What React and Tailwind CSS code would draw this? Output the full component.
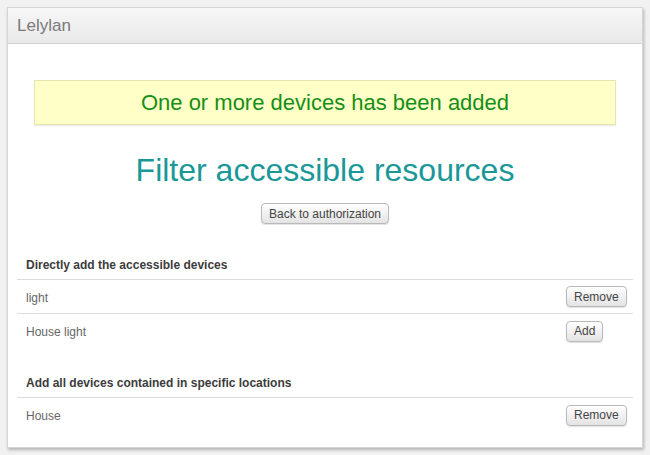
import React from 'react';

const font = { fontFamily: '"Liberation Sans", Arial, sans-serif' };

function Btn({ children }) {
  return (
    <button className="h-[21px] px-[7px] rounded-[4px] border border-[#b9b9b9] bg-gradient-to-b from-white to-[#e3e3e3] text-[12px] leading-none text-[#444] shadow-[0_1px_1px_rgba(0,0,0,0.12)]">
      {children}
    </button>
  );
}

function Row({ label, action, border }) {
  return (
    <div className={`flex items-center h-[34px] pl-[9px] pr-[7px] pt-[2px] ${border ? 'border-b border-[#dcdcdc]' : ''}`}>
      <div className="flex-1 text-[12px] text-[#666]">{label}</div>
      <div className="w-[60px] flex -mt-[2px]">
        <Btn>{action}</Btn>
      </div>
    </div>
  );
}

function Heading({ children }) {
  return (
    <div className="h-[31px] flex items-center pl-[9px] pt-[2px] border-b border-[#dcdcdc] text-[12px] font-bold text-[#3c3c3c]">
      {children}
    </div>
  );
}

export default function App() {
  return (
    <div className="w-[650px] h-[455px] bg-[#f1f1f1] p-[7px]" style={font}>
      <div className="w-[636px] h-[441px] bg-white border border-[#d6d6d6] shadow-[1px_2px_3px_rgba(0,0,0,0.25)] flex flex-col">
        <div className="h-[36px] flex items-center pl-[9px] bg-gradient-to-b from-[#f7f7f7] to-[#e9e9e9] border-b border-[#d2d2d2] text-[17px] text-[#7a7a7a]">
          Lelylan
        </div>

        <div className="mx-[26px] mt-[36px] h-[45px] flex items-center justify-center bg-[#ffffc8] border border-[#e6e6b4] shadow-[0_1px_1px_rgba(0,0,0,0.08)] text-[22px] text-[#178f17]">
          One or more devices has been added
        </div>

        <h1 className="mt-[25px] h-[40px] flex items-center justify-center text-[32px] text-[#1a9898]">
          Filter accessible resources
        </h1>

        <div className="mt-[13px] flex justify-center">
          <Btn>Back to authorization</Btn>
        </div>

        <div className="mx-[9px] mt-[25px]">
          <Heading>Directly add the accessible devices</Heading>
          <Row label="light" action="Remove" border />
          <Row label="House light" action="Add" />
          <div className="h-[19px]" />
          <Heading>Add all devices contained in specific locations</Heading>
          <Row label="House" action="Remove" />
        </div>
      </div>
    </div>
  );
}
